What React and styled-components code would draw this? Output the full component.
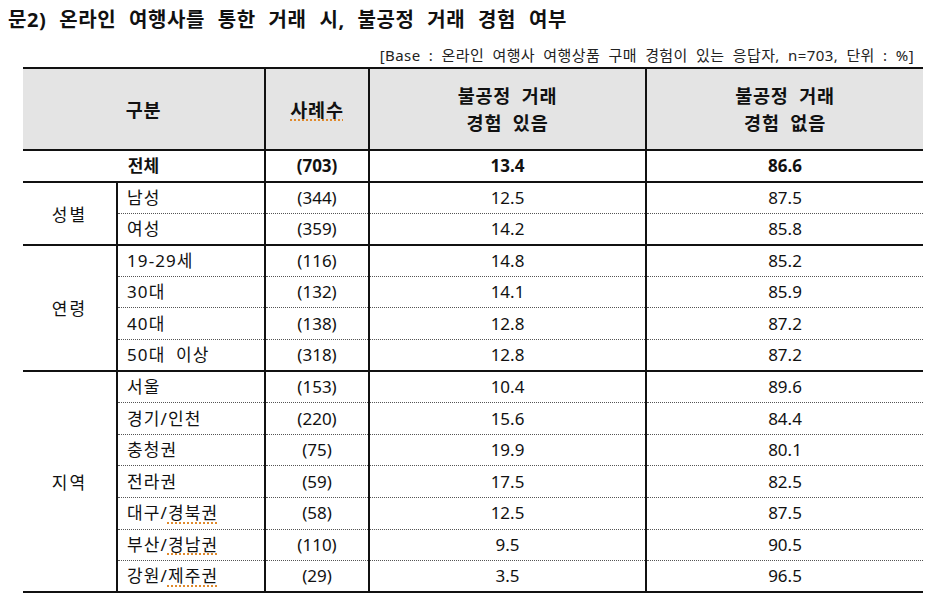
import React from "react";
import styled, { createGlobalStyle } from "styled-components";

const Global = createGlobalStyle`
  html, body { margin: 0; padding: 0; background: #fff; }
  body { font-family: "Noto Sans", "Noto Sans CJK KR", sans-serif; color: #111; }
`;

const Page = styled.div`
  width: 935px;
  height: 612px;
  padding: 7px 0 0 8px;
  box-sizing: border-box;
`;

const Title = styled.h1`
  margin: 0;
  font-size: 20px;
  font-weight: 700;
  line-height: 26px;
  word-spacing: 7px;
  letter-spacing: 0.6px;
`;

const Note = styled.div`
  width: 906px;
  text-align: right;
  font-size: 15px;
  line-height: 20px;
  margin-top: 12px;
  word-spacing: 4px;
  letter-spacing: 0.4px;
  color: #222;
`;

const Table = styled.table`
  margin-left: 15px;
  margin-top: 2px;
  width: 900px;
  border-collapse: collapse;
  table-layout: fixed;
  font-size: 17px;
`;

const Th = styled.th`
  background: #e4e4e4;
  height: 80px;
  padding: 0;
  font-size: 18.5px;
  font-weight: 700;
  line-height: 27px;
  word-spacing: 5px;
  letter-spacing: 0.8px;
  border-top: 2px solid #111;
  border-bottom: 2px solid #111;
  border-left: ${(p) => (p.$first ? "none" : "2px solid #111")};
`;

const Row = styled.tr`
  height: 31.6px;
`;

const Cell = styled.td`
  padding: 0;
  padding-left: ${(p) => (p.$left ? "9px" : "0")};
  text-align: ${(p) => (p.$left ? "left" : "center")};
  font-weight: ${(p) => (p.$bold ? 700 : 400)};
  line-height: 20px;
  word-spacing: 5px;
  letter-spacing: ${(p) => (p.$left ? "1.1px" : "0")};
  border-left: ${(p) => (p.$noLeft ? "none" : "2px solid #111")};
  border-bottom: ${(p) => (p.$end ? "2px solid #111" : "1px dotted #555")};
  vertical-align: middle;
`;

const Group = styled.td`
  padding: 0;
  text-align: center;
  letter-spacing: 2px;
  border-bottom: 2px solid #111;
  vertical-align: middle;
`;

const Spell = styled.span`
  text-decoration: underline dotted #e08a2c;
  text-decoration-thickness: 1.5px;
  text-underline-offset: 3px;
`;

const groups = [
  {
    name: "성별",
    rows: [
      ["남성", "(344)", "12.5", "87.5"],
      ["여성", "(359)", "14.2", "85.8"],
    ],
  },
  {
    name: "연령",
    rows: [
      ["19-29세", "(116)", "14.8", "85.2"],
      ["30대", "(132)", "14.1", "85.9"],
      ["40대", "(138)", "12.8", "87.2"],
      ["50대 이상", "(318)", "12.8", "87.2"],
    ],
  },
  {
    name: "지역",
    rows: [
      ["서울", "(153)", "10.4", "89.6"],
      ["경기/인천", "(220)", "15.6", "84.4"],
      ["충청권", "(75)", "19.9", "80.1"],
      ["전라권", "(59)", "17.5", "82.5"],
      [["대구/", "경북권"], "(58)", "12.5", "87.5"],
      [["부산/", "경남권"], "(110)", "9.5", "90.5"],
      [["강원/", "제주권"], "(29)", "3.5", "96.5"],
    ],
  },
];

const label = (l) =>
  Array.isArray(l) ? (
    <>
      {l[0]}
      <Spell>{l[1]}</Spell>
    </>
  ) : (
    l
  );

export default function App() {
  return (
    <Page>
      <Global />
      <Title>문2) 온라인 여행사를 통한 거래 시, 불공정 거래 경험 여부</Title>
      <Note>[Base : 온라인 여행사 여행상품 구매 경험이 있는 응답자, n=703, 단위 : %]</Note>
      <Table>
        <colgroup>
          <col style={{ width: 94 }} />
          <col style={{ width: 148 }} />
          <col style={{ width: 104 }} />
          <col style={{ width: 277 }} />
          <col style={{ width: 277 }} />
        </colgroup>
        <thead>
          <tr>
            <Th $first colSpan={2}>구분</Th>
            <Th><Spell>사례수</Spell></Th>
            <Th>불공정 거래<br />경험 있음</Th>
            <Th>불공정 거래<br />경험 없음</Th>
          </tr>
        </thead>
        <tbody>
          <Row>
            <Cell $noLeft $bold $end colSpan={2}>전체</Cell>
            <Cell $bold $end>(703)</Cell>
            <Cell $bold $end>13.4</Cell>
            <Cell $bold $end>86.6</Cell>
          </Row>
          {groups.map((g) =>
            g.rows.map((r, i) => {
              const end = i === g.rows.length - 1;
              return (
                <Row key={g.name + i}>
                  {i === 0 && <Group rowSpan={g.rows.length}>{g.name}</Group>}
                  <Cell $left $end={end}>{label(r[0])}</Cell>
                  <Cell $end={end}>{r[1]}</Cell>
                  <Cell $end={end}>{r[2]}</Cell>
                  <Cell $end={end}>{r[3]}</Cell>
                </Row>
              );
            })
          )}
        </tbody>
      </Table>
    </Page>
  );
}
